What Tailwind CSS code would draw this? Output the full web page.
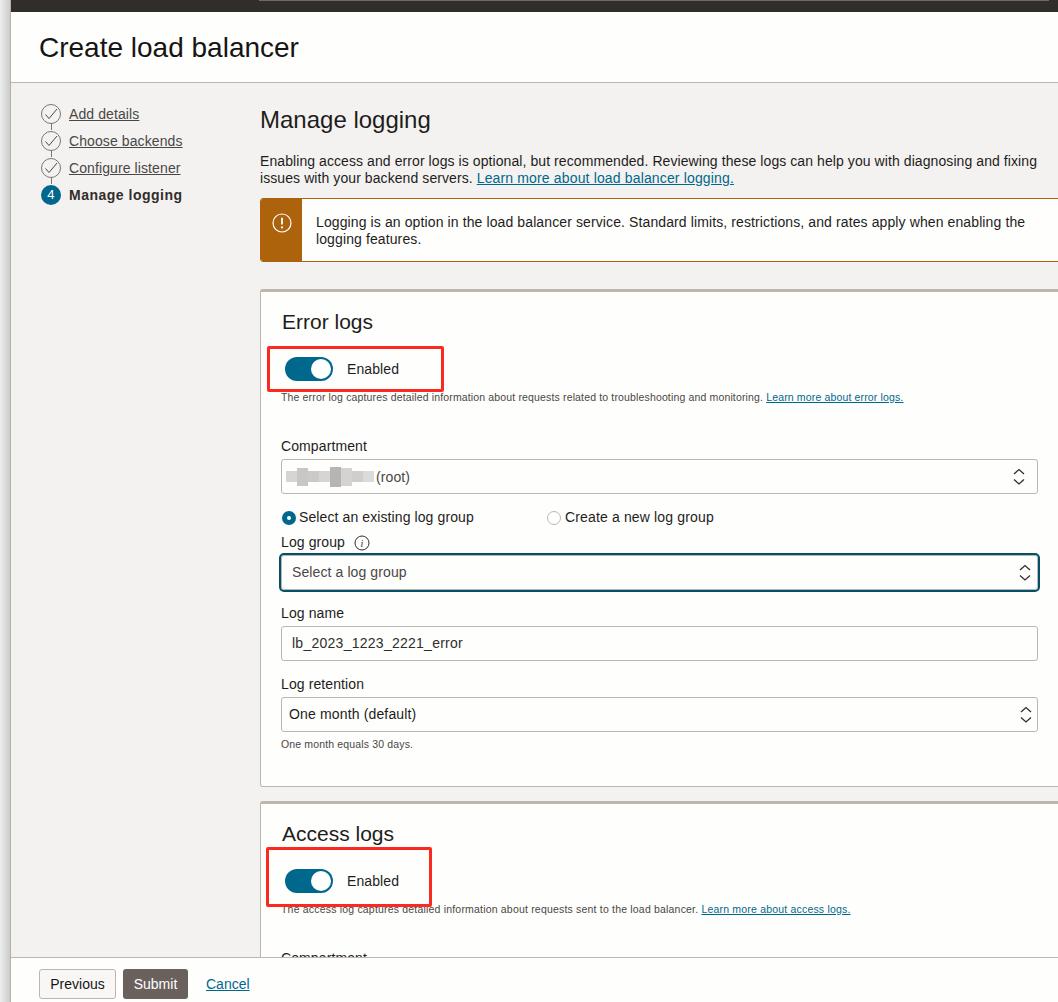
<!DOCTYPE html>
<html lang="en">
<head>
  <meta charset="UTF-8">
  <title>Create load balancer</title>
  <script src="https://cdn.jsdelivr.net/npm/@tailwindcss/browser@4"></script>
</head>
<body class="h-[1002px] w-[1058px] overflow-hidden bg-linear-to-r from-[#eeeeee] to-[#cccccc] bg-[length:10px_100%] bg-no-repeat font-['Liberation_Sans',Arial,sans-serif] text-[#161513]">
  <div class="relative ml-[10px] flex h-[1002px] w-[1048px] flex-col overflow-hidden border-l border-[#b5b0a8] bg-[#fefefd]">
    <!-- top bar -->
    <div class="h-[12px] shrink-0 bg-[#312d2a]">
      <div class="ml-[248px] h-px w-[790px] bg-[#6f6a65]"></div>
    </div>

    <!-- title -->
    <div class="flex h-[71px] shrink-0 items-center border-b border-[#bcb6ae] pl-[28px] pt-[1px]">
      <h1 class="text-[28px] leading-[32px]">Create load balancer</h1>
    </div>

    <div class="flex min-h-0 flex-1 bg-[#f3f2f1]">
      <!-- steps -->
      <nav class="w-[249px] shrink-0 pl-[30px] pt-[17px]">
        <ol class="flex flex-col text-[14px] leading-[20px] tracking-[0.1px]">
          <li class="relative flex h-[27px] items-center gap-[8px]">
            <svg class="h-[20px] w-[20px]" viewBox="0 0 20 20" fill="none"><circle cx="10" cy="10" r="9.5" stroke="#7a7671"/><path d="M4.5 10.5l3.5 4L16 5" stroke="#4b4845" stroke-width="1"/></svg>
            <a class="text-[#4a4744] underline">Add details</a>
            <span class="absolute left-[10px] top-[23px] h-[7px] w-px bg-[#7a7671]"></span>
          </li>
          <li class="relative flex h-[27px] items-center gap-[8px]">
            <svg class="h-[20px] w-[20px]" viewBox="0 0 20 20" fill="none"><circle cx="10" cy="10" r="9.5" stroke="#7a7671"/><path d="M4.5 10.5l3.5 4L16 5" stroke="#4b4845" stroke-width="1"/></svg>
            <a class="text-[#4a4744] underline">Choose backends</a>
            <span class="absolute left-[10px] top-[23px] h-[7px] w-px bg-[#7a7671]"></span>
          </li>
          <li class="relative flex h-[27px] items-center gap-[8px]">
            <svg class="h-[20px] w-[20px]" viewBox="0 0 20 20" fill="none"><circle cx="10" cy="10" r="9.5" stroke="#7a7671"/><path d="M4.5 10.5l3.5 4L16 5" stroke="#4b4845" stroke-width="1"/></svg>
            <a class="text-[#4a4744] underline">Configure listener</a>
            <span class="absolute left-[10px] top-[23px] h-[7px] w-px bg-[#7a7671]"></span>
          </li>
          <li class="flex h-[27px] items-center gap-[8px]">
            <span class="flex h-[20px] w-[20px] items-center justify-center rounded-full bg-[#00688c] text-[13px] text-white">4</span>
            <span class="font-bold tracking-[0.5px] text-[#312d2a]">Manage logging</span>
          </li>
        </ol>
      </nav>

      <!-- content -->
      <main class="min-w-0 flex-1 overflow-hidden pt-[22px] tracking-[0.1px]">
        <h2 class="text-[24px] leading-[30px] tracking-normal text-[#1f1d1b]">Manage logging</h2>
        <p class="mt-[18px] w-[790px] text-[14px] leading-[17px] tracking-[0.08px] text-[#1f1d1b]">Enabling access and error logs is optional, but recommended. Reviewing these logs can help you with diagnosing and fixing issues with your backend servers. <a class="tracking-[0.15px] text-[#00688c] underline">Learn more about load balancer logging.</a></p>

        <div class="mt-[11px] flex h-[64px] w-[810px] overflow-hidden rounded-[3px] border border-[#ac630c] bg-[#fefefd]">
          <div class="flex w-[41px] shrink-0 justify-center bg-[#ac630c] pt-[14px]">
            <svg class="h-[20px] w-[20px]" viewBox="0 0 20 20" fill="none"><circle cx="10" cy="10" r="9" stroke="#fff" stroke-width="1.2"/><path d="M10 4.8v6.6" stroke="#fff" stroke-width="1.8"/><circle cx="10" cy="14.4" r="1.1" fill="#fff"/></svg>
          </div>
          <p class="pl-[14px] pt-[15px] text-[14px] leading-[17px] tracking-[0.11px] text-[#1f1d1b]">Logging is an option in the load balancer service. Standard limits, restrictions, and rates apply when enabling the logging features.</p>
        </div>

        <!-- error logs -->
        <section class="mt-[27px] h-[498px] w-[810px] rounded-[3px] border border-t-[3px] border-[#bcb6ae] bg-[#fefefd] pl-[20px] pt-[18px]">
          <h3 class="ml-[1px] text-[21px] leading-[24px] tracking-normal text-[#1f1d1b]">Error logs</h3>
          <div class="mt-[23px] flex h-[24px] items-center pl-[4px]">
            <span class="flex h-[24px] w-[48px] items-center justify-end rounded-full bg-[#00688c] pr-[2px]"><span class="h-[20px] w-[20px] rounded-full bg-white"></span></span>
            <span class="ml-[14px] text-[14px] text-[#1f1d1b]">Enabled</span>
          </div>
          <p class="mt-[10px] whitespace-nowrap text-[10.5px] leading-[12px] tracking-[0.15px] text-[#4a4744]">The error log captures detailed information about requests related to troubleshooting and monitoring. <a class="text-[#00688c] underline">Learn more about error logs.</a></p>

          <label class="mt-[35px] block text-[14px] leading-[17px] text-[#1f1d1b]">Compartment</label>
          <div class="mt-[4px] flex h-[35px] w-[757px] items-center rounded-[3px] border border-[#bcb6ae] pl-[4px] pr-[12px] text-[14px]">
            <span class="flex w-[88px] items-center">
              <span class="h-[11px] w-[11px] bg-[#d6d5d4]"></span>
              <span class="h-[18px] w-[11px] bg-[#c8c7c6]"></span>
              <span class="h-[11px] w-[11px] bg-[#cbcac9]"></span>
              <span class="h-[11px] w-[11px] bg-[#d6d5d4]"></span>
              <span class="h-[20px] w-[11px] bg-[#b6b5b4]"></span>
              <span class="h-[18px] w-[11px] bg-[#d4d3d2]"></span>
              <span class="h-[11px] w-[11px] bg-[#cfcecd]"></span>
              <span class="h-[11px] w-[11px] bg-[#dcdbda]"></span>
            </span>
            <span class="ml-[2px] pt-[1px] text-[#4a4744]">(root)</span>
            <svg class="ml-auto h-[18px] w-[12px]" viewBox="0 0 12 18" fill="none" stroke="#312d2a" stroke-width="1.3"><path d="M1 6L6 1.5 11 6M1 11.5L6 16l5-4.5"/></svg>
          </div>

          <div class="mt-[15px] flex h-[17px] items-center pl-[1px] text-[14px] text-[#1f1d1b]">
            <span class="flex h-[14px] w-[14px] items-center justify-center rounded-full bg-[#00688c]"><span class="h-[4px] w-[4px] rounded-full bg-white"></span></span>
            <span class="ml-[3px] w-[248px]">Select an existing log group</span>
            <span class="h-[14px] w-[14px] rounded-full border border-[#bcb6ae] bg-white"></span>
            <span class="ml-[4px] tracking-[0.15px]">Create a new log group</span>
          </div>

          <div class="mt-[8px] flex h-[17px] items-center text-[14px] text-[#1f1d1b]">
            <span>Log group</span>
            <svg class="ml-[9px] h-[16px] w-[16px]" viewBox="0 0 16 16" fill="none"><circle cx="8" cy="8" r="7" stroke="#312d2a"/><text x="8" y="11.5" text-anchor="middle" font-size="10" font-style="italic" font-family="Liberation Serif" fill="#312d2a">i</text></svg>
          </div>
          <div class="mt-[4px] flex h-[35px] w-[757px] items-center rounded-[3px] border border-[#bcb6ae] pl-[10px] pr-[6px] text-[14px] text-[#4a4744] outline-2 outline-[#04506b]">
            <span>Select a log group</span>
            <svg class="ml-auto h-[18px] w-[12px]" viewBox="0 0 12 18" fill="none" stroke="#312d2a" stroke-width="1.3"><path d="M1 6L6 1.5 11 6M1 11.5L6 16l5-4.5"/></svg>
          </div>

          <label class="mt-[15px] block text-[14px] leading-[17px] text-[#1f1d1b]">Log name</label>
          <div class="mt-[4px] flex h-[35px] w-[757px] items-center rounded-[3px] border border-[#bcb6ae] pl-[10px] text-[14px] tracking-[0.26px] text-[#312d2a]">lb_2023_1223_2221_error</div>

          <label class="mt-[15px] block text-[14px] leading-[17px] text-[#1f1d1b]">Log retention</label>
          <div class="mt-[4px] flex h-[35px] w-[757px] items-center rounded-[3px] border border-[#bcb6ae] pl-[7px] pr-[5px] text-[14px] tracking-[0.15px] text-[#1f1d1b]">
            <span>One month (default)</span>
            <svg class="ml-auto h-[18px] w-[12px]" viewBox="0 0 12 18" fill="none" stroke="#312d2a" stroke-width="1.3"><path d="M1 6L6 1.5 11 6M1 11.5L6 16l5-4.5"/></svg>
          </div>
          <p class="mt-[6px] text-[10.5px] leading-[12px] tracking-[0.15px] text-[#4a4744]">One month equals 30 days.</p>
        </section>

        <!-- access logs -->
        <section class="mt-[14px] h-[400px] w-[810px] rounded-[3px] border border-t-[3px] border-[#bcb6ae] bg-[#fefefd] pl-[20px] pt-[18px]">
          <h3 class="ml-[1px] text-[21px] leading-[24px] tracking-normal text-[#1f1d1b]">Access logs</h3>
          <div class="mt-[23px] flex h-[24px] items-center pl-[4px]">
            <span class="flex h-[24px] w-[48px] items-center justify-end rounded-full bg-[#00688c] pr-[2px]"><span class="h-[20px] w-[20px] rounded-full bg-white"></span></span>
            <span class="ml-[14px] text-[14px] text-[#1f1d1b]">Enabled</span>
          </div>
          <p class="mt-[10px] whitespace-nowrap text-[10.5px] leading-[12px] tracking-[0.19px] text-[#4a4744]">The access log captures detailed information about requests sent to the load balancer. <a class="text-[#00688c] underline">Learn more about access logs.</a></p>
          <label class="mt-[35px] block text-[14px] leading-[17px] text-[#1f1d1b]">Compartment</label>
        </section>
      </main>
    </div>

    <!-- footer -->
    <footer class="relative z-10 flex h-[45px] shrink-0 items-start border-t border-[#bcb6ae] bg-[#fefefd] pl-[28px] pt-[11px] text-[14px]">
      <button class="h-[30px] w-[77px] rounded-[3px] border border-[#bcb6ae] bg-[#f8f7f6] text-[#161513]">Previous</button>
      <button class="ml-[7px] h-[30px] w-[65px] rounded-[3px] bg-[#6b615c] text-white">Submit</button>
      <a class="ml-[18px] leading-[30px] text-[#00688c] underline">Cancel</a>
    </footer>

    <!-- annotation boxes on top of the screenshot -->
    <div class="absolute left-[256px] top-[346px] h-[46px] w-[177px] rounded-[2px] border-[3px] border-[#fb2a20]"></div>
    <div class="absolute left-[255px] top-[847px] h-[60px] w-[166px] rounded-[2px] border-[3px] border-[#fb2a20]"></div>
  </div>
</body>
</html>
